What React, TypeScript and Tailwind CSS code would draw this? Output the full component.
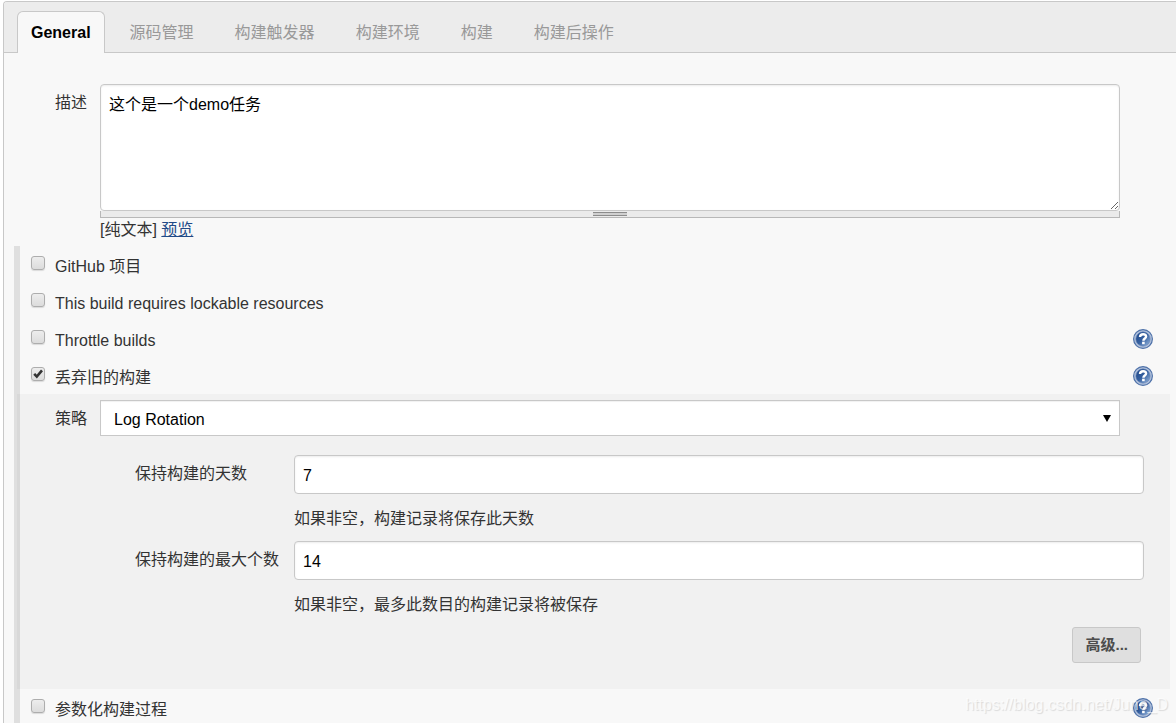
import { useState } from 'react'
import type { ReactNode } from 'react'

const TABS = ['General', '源码管理', '构建触发器', '构建环境', '构建', '构建后操作']

function HelpIcon() {
  return (
    <svg className="block size-5" viewBox="0 0 20 20" aria-hidden="true">
      <defs>
        <linearGradient id="help-fill" x1="0" y1="0" x2="1" y2="1">
          <stop offset="0" stopColor="#1f4787" />
          <stop offset="0.5" stopColor="#3560a0" />
          <stop offset="1" stopColor="#9dbbe0" />
        </linearGradient>
      </defs>
      <circle cx="10" cy="10" r="9.4" fill="#b4c3dc" stroke="#4f72a9" strokeWidth="1.2" />
      <circle cx="10" cy="10" r="7.2" fill="url(#help-fill)" stroke="#6485b8" strokeWidth="0.6" />
      <path
        d="M7 8C7.1 6 8.4 5.2 10.1 5.2c1.8 0 3 .8 3 2.3 0 2-2.7 2-2.7 4.2"
        fill="none"
        stroke="#fff"
        strokeWidth="2.4"
      />
      <rect x="9.1" y="12.7" width="2.6" height="2.5" fill="#fff" />
    </svg>
  )
}

function HelpButton({ name }: { name: string }) {
  return (
    <button type="button" aria-label={`Help: ${name}`} className="mt-[9px] mr-[23px] ml-auto size-5 shrink-0">
      <HelpIcon />
    </button>
  )
}

type OptionRowProps = {
  id: string
  label: string
  defaultChecked?: boolean
  help?: boolean
}

function OptionRow({ id, label, defaultChecked, help }: OptionRowProps) {
  return (
    <div className="flex h-[37px] items-start">
      <span className="relative mt-2.5 mr-2.5 ml-[11px] size-3.5 shrink-0">
        <input
          id={id}
          type="checkbox"
          defaultChecked={defaultChecked}
          className="peer block size-3.5 appearance-none rounded-[3px] border border-[#adadad] bg-linear-to-b from-[#ededed] to-[#dcdcdc] shadow-[0_1px_1px_rgba(0,0,0,0.12)]"
        />
        <svg
          className="pointer-events-none absolute inset-0 hidden size-3.5 peer-checked:block"
          viewBox="0 0 14 14"
          aria-hidden="true"
        >
          <path d="M3.2 6.9l2.6 2.7L11 3.4" fill="none" stroke="#333" strokeWidth="2.6" />
        </svg>
      </span>
      <label htmlFor={id} className="mt-[9px]">
        {label}
      </label>
      {help && <HelpButton name={label} />}
    </div>
  )
}

type NumberFieldProps = {
  id: string
  label: string
  value: string
  children: ReactNode
}

function NumberField({ id, label, value, children }: NumberFieldProps) {
  return (
    <div className="mb-2.5 grid grid-cols-[159px_1fr] pr-[26px] pl-[115px]">
      <label htmlFor={id} className="mt-[7px]">
        {label}
      </label>
      <div>
        <input
          id={id}
          type="text"
          defaultValue={value}
          className="block h-[39px] w-full rounded-[4px] border border-[#c8c8c8] bg-white px-2 pt-0.5 text-black shadow-[inset_0_1px_2px_rgba(0,0,0,0.08)]"
        />
        <p className="mt-[13px]">{children}</p>
      </div>
    </div>
  )
}

export default function App() {
  const [active, setActive] = useState('General')

  return (
    <div
      lang="zh-CN"
      className="relative h-screen overflow-hidden bg-white pt-px pl-[3px] font-['Liberation_Sans','Noto_Sans_CJK_SC',sans-serif] text-base text-[#333]"
    >
      <form className="min-h-full rounded-tl-[4px] border-t border-l border-[#c8c8c8] bg-[#f8f8f8]">
        {/* Tabs */}
        <div className="flex h-[51px] items-end rounded-tl-[3px] border-b border-[#c8c8c8] bg-[#ececec] pl-[13px]">
          {TABS.map((tab) => (
            <button
              key={tab}
              type="button"
              onClick={() => setActive(tab)}
              className={
                tab === active
                  ? '-mb-px mr-[5px] h-[42px] rounded-t-[6px] border border-b-0 border-[#c8c8c8] bg-[#f8f8f8] px-[13px] font-bold text-black'
                  : 'h-10 border-x border-transparent pt-0.5 pr-5 pl-[19px] text-[#999]'
              }
            >
              {tab}
            </button>
          ))}
        </div>

        {/* Description */}
        <div className="mt-[31px] mb-1 grid grid-cols-[45px_1fr] pr-14 pl-[51px]">
          <label htmlFor="description" className="mt-[7px]">
            描述
          </label>
          <div>
            <textarea
              id="description"
              defaultValue="这个是一个demo任务"
              className="block h-[127px] w-full resize-y rounded-[4px] border border-[#c8c8c8] bg-white px-2 py-2 leading-6 text-black shadow-[inset_0_1px_2px_rgba(0,0,0,0.08)]"
            />
            <div className="flex h-[7px] justify-center border border-t-0 border-[#b8b8b8] bg-[#ebebeb] pt-px">
              <div className="h-1 w-[34px] border-y border-[#8c8c8c] bg-[#d0d0d0]" />
            </div>
            <p>
              [纯文本]{' '}
              <a href="#preview" className="text-[#204a87] underline">
                预览
              </a>
            </p>
          </div>
        </div>

        {/* Optional blocks */}
        <div className="ml-2.5 border-l-[6px] border-[#dfdfdf]">
          <OptionRow id="github" label="GitHub 项目" />
          <OptionRow id="lockable" label="This build requires lockable resources" />
          <OptionRow id="throttle" label="Throttle builds" help />
          <OptionRow id="discard" label="丢弃旧的构建" defaultChecked help />

          <div className="mr-1.5 -ml-[3px] border-l-[3px] border-[#d8d8d8] bg-[#f1f1f1] pt-1.5 pb-[26px]">
            <div className="mb-[19px] grid grid-cols-[45px_1fr] pr-[50px] pl-[35px]">
              <label htmlFor="strategy" className="mt-[7px]">
                策略
              </label>
              <div className="relative">
                <select
                  id="strategy"
                  className="block h-9 w-full appearance-none border border-[#c8c8c8] bg-white px-[13px] pt-[3px] text-black shadow-[inset_0_1px_1px_rgba(0,0,0,0.06)]"
                >
                  <option>Log Rotation</option>
                </select>
                <svg
                  className="pointer-events-none absolute top-[15px] right-[9px] h-[7px] w-2"
                  viewBox="0 0 8 7"
                  aria-hidden="true"
                >
                  <path d="M0 0h8L4 7z" fill="#000" />
                </svg>
              </div>
            </div>

            <NumberField id="days" label="保持构建的天数" value="7">
              如果非空，构建记录将保存此天数
            </NumberField>
            <NumberField id="builds" label="保持构建的最大个数" value="14">
              如果非空，最多此数目的构建记录将被保存
            </NumberField>

            <div className="flex justify-end pr-[29px]">
              <button
                type="button"
                className="h-9 rounded-[3px] border border-[#c8c8c8] bg-[#dfdfdf] px-3 text-[15px] font-bold text-[#4d4d4d]"
              >
                高级...
              </button>
            </div>
          </div>

          <OptionRow id="parameters" label="参数化构建过程" help />
        </div>
      </form>

      <span className="pointer-events-none absolute right-2 bottom-1.5 text-white/70 [text-shadow:1px_1px_1px_rgba(0,0,0,0.12)]">
        https://blog.csdn.net/June_D
      </span>
    </div>
  )
}
